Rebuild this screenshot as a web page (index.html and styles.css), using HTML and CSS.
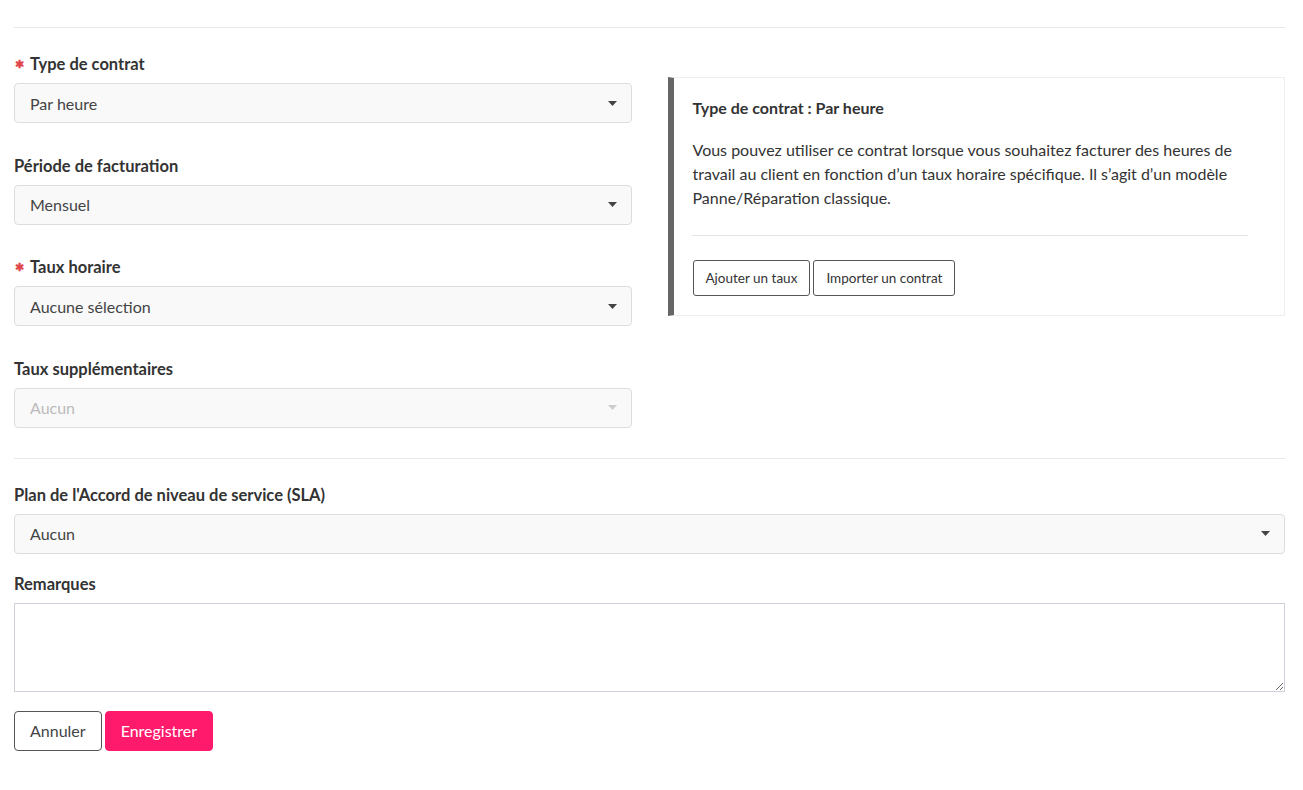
FILE: index.html
```html
<!DOCTYPE html>
<html lang="fr">
<head>
  <meta charset="UTF-8">
  <meta name="viewport" content="width=device-width, initial-scale=1.0">
  <title>Contrat</title>
  <link rel="stylesheet" href="styles.css">
</head>
<body>
  <div class="page">
    <hr class="rule">

    <div class="top">
      <div class="fields">
        <div class="field">
          <label class="lbl"><span class="req">✱</span>Type de contrat</label>
          <div class="select">
            <span>Par heure</span>
            <svg class="caret" width="9" height="5" viewBox="0 0 9 5"><path d="M0 0h9L4.5 5z" fill="#444"/></svg>
          </div>
        </div>

        <div class="field">
          <label class="lbl">Période de facturation</label>
          <div class="select">
            <span>Mensuel</span>
            <svg class="caret" width="9" height="5" viewBox="0 0 9 5"><path d="M0 0h9L4.5 5z" fill="#444"/></svg>
          </div>
        </div>

        <div class="field">
          <label class="lbl"><span class="req">✱</span>Taux horaire</label>
          <div class="select">
            <span>Aucune sélection</span>
            <svg class="caret" width="9" height="5" viewBox="0 0 9 5"><path d="M0 0h9L4.5 5z" fill="#444"/></svg>
          </div>
        </div>

        <div class="field last">
          <label class="lbl">Taux supplémentaires</label>
          <div class="select disabled">
            <span>Aucun</span>
            <svg class="caret" width="9" height="5" viewBox="0 0 9 5"><path d="M0 0h9L4.5 5z" fill="#ccc"/></svg>
          </div>
        </div>
      </div>

      <div class="info">
        <h4 class="info-title">Type de contrat : Par heure</h4>
        <p class="info-text">Vous pouvez utiliser ce contrat lorsque vous souhaitez facturer des heures de travail au client en fonction d’un taux horaire spécifique. Il s’agit d’un modèle Panne/Réparation classique.</p>
        <hr class="info-rule">
        <div class="info-actions">
          <button class="btn-sm">Ajouter un taux</button>
          <button class="btn-sm">Importer un contrat</button>
        </div>
      </div>
    </div>

    <hr class="rule mid">

    <div class="field sla">
      <label class="lbl">Plan de l'Accord de niveau de service (SLA)</label>
      <div class="select">
        <span>Aucun</span>
        <svg class="caret" width="9" height="5" viewBox="0 0 9 5"><path d="M0 0h9L4.5 5z" fill="#444"/></svg>
      </div>
    </div>

    <div class="field notes">
      <label class="lbl">Remarques</label>
      <textarea class="area"></textarea>
    </div>

    <div class="actions">
      <button class="btn">Annuler</button>
      <button class="btn primary">Enregistrer</button>
    </div>
  </div>
</body>
</html>
```

FILE: styles.css
```css
body{
  margin: 0;
  font-family: Lato, "Liberation Sans", sans-serif;
  color: #333;
  background: #fff;
}

.page{
  padding: 27px 18px 0 14px;
}

.rule{
  border: 0;
  border-top: 1px solid #e8e8e8;
  margin: 0;
}

.top{
  display: grid;
  grid-template-columns: minmax(0, 1fr) minmax(0, 1fr);
  column-gap: 36px;
  margin-top: 26px;
}

.field{
  margin-bottom: 32.5px;
}

.field.last{
  margin-bottom: 0;
}

.lbl{
  display: block;
  font-weight: bold;
  font-size: 16.5px;
  line-height: 20px;
  margin-bottom: 9px;
  color: #333;
}

.req{
  display: inline-block;
  line-height: 1;
  color: #e0474c;
  font-size: 11px;
  margin-right: 6px;
  margin-left: 1px;
  vertical-align: 2px;
}

.select{
  display: flex;
  align-items: center;
  justify-content: space-between;
  height: 40px;
  box-sizing: border-box;
  padding: 0 14px 0 15px;
  background: #f9f9f9;
  border: 1px solid #ddd;
  border-radius: 4px;
  font-size: 16px;
  color: #444;
}

.select.disabled{
  color: #bbb;
}

.info{
  align-self: start;
  margin-top: 23px;
  border: 1px solid #eee;
  border-left: 6px solid #666;
  padding: 20px 36px 19px 19px;
}

.info-title{
  margin: 0;
  font-size: 16px;
  line-height: 20px;
  font-weight: bold;
}

.info-text{
  margin: 20px 0 0;
  font-size: 16px;
  line-height: 24px;
  color: #333;
}

.info-rule{
  border: 0;
  border-top: 1px solid #e5e5e5;
  margin: 25px 0 24px -1px;
}

.info-actions{
  display: flex;
  gap: 3px;
}

.btn-sm{
  height: 36px;
  padding: 0 12px;
  background: #fff;
  border: 1px solid #555;
  border-radius: 3px;
  font-family: inherit;
  font-size: 13.5px;
  color: #333;
}

.rule.mid{
  margin-top: 30px;
}

.sla{
  margin-top: 26px;
  margin-bottom: 20px;
}

.notes{
  margin-bottom: 19px;
}

.area{
  display: block;
  width: 100%;
  height: 89px;
  box-sizing: border-box;
  border: 1px solid #ccd1da;
  border-radius: 0;
  margin: 0;
  font-family: inherit;
}

.actions{
  display: flex;
  gap: 3px;
}

.btn{
  height: 40px;
  padding: 0 15px;
  background: #fff;
  border: 1px solid #555;
  border-radius: 4px;
  font-family: inherit;
  font-size: 16px;
  color: #444;
}

.btn.primary{
  background: #ff1a6b;
  border-color: #ff1a6b;
  color: #fff;
}
```
